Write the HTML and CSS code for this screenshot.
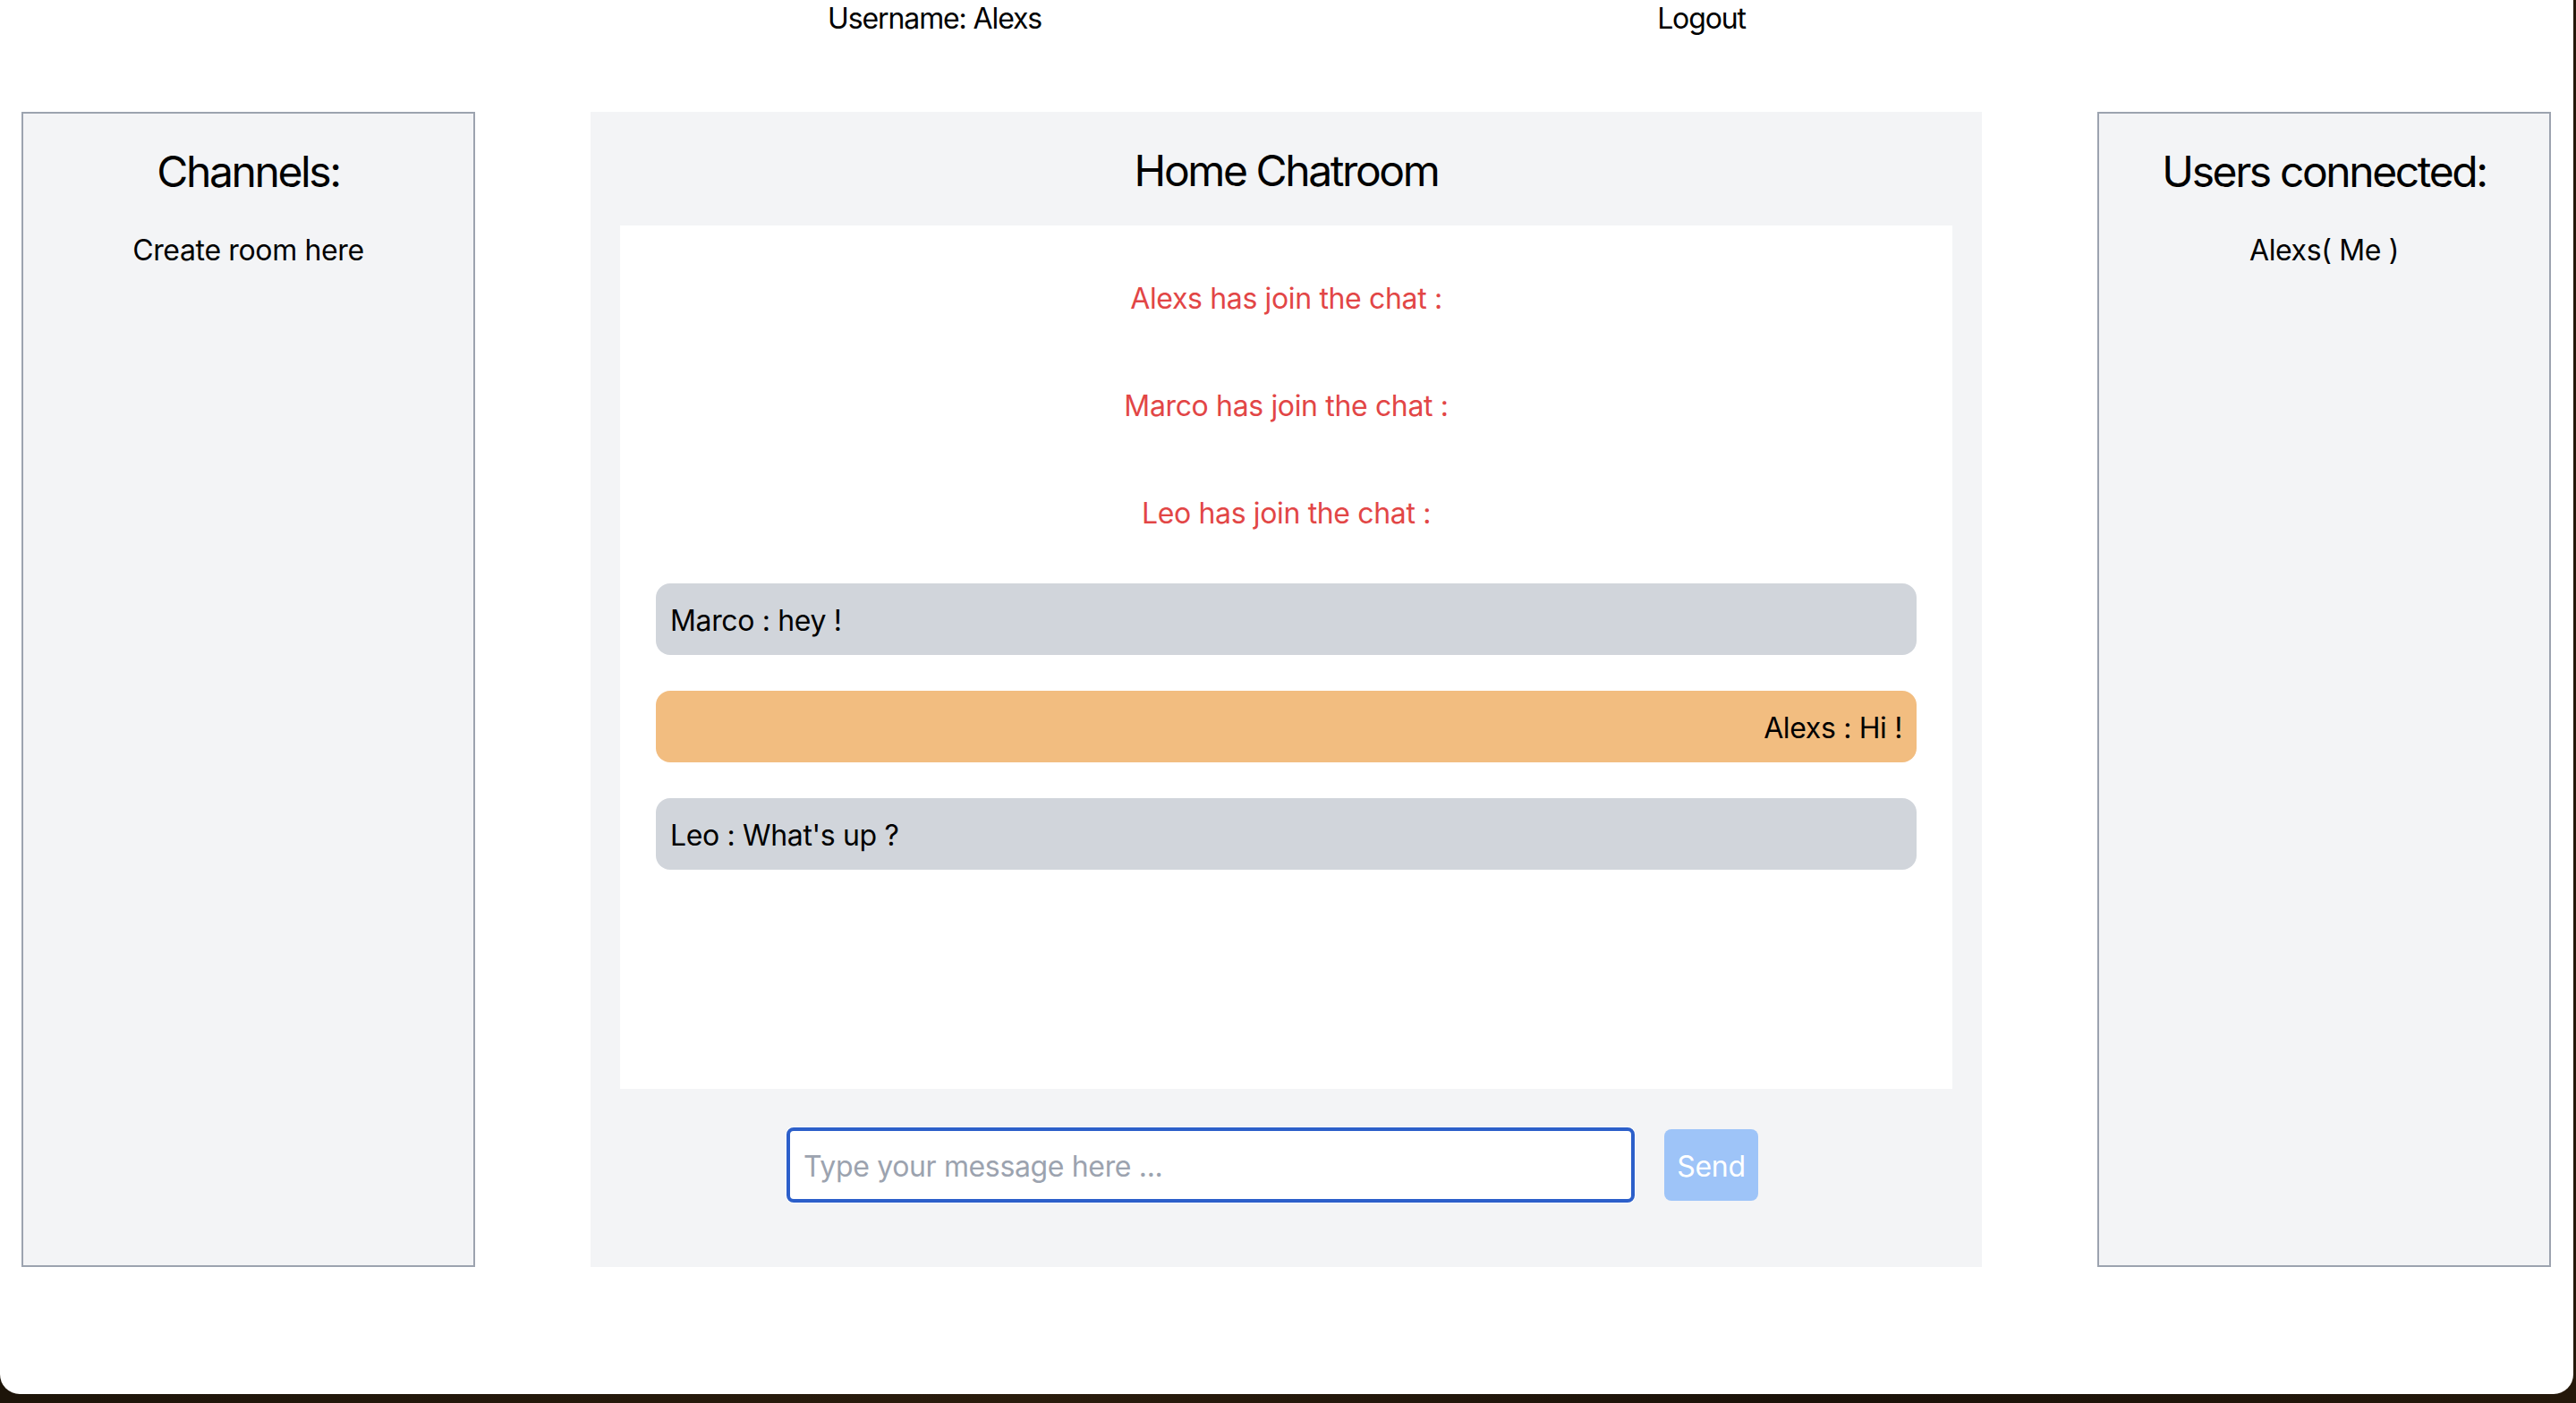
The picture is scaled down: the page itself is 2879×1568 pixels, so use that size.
FILE: index.html
```html
<!DOCTYPE html>
<html lang="en">
<head>
<meta charset="utf-8">
<title>Home Chatroom</title>
<link rel="stylesheet" href="styles.css">
</head>
<body>
<div class="window">
  <header class="topbar">
    <span class="topbar-item">Username: Alexs</span>
    <span class="topbar-item">Logout</span>
  </header>
  <main class="layout">
    <aside class="panel">
      <h2 class="panel-title">Channels:</h2>
      <p class="panel-text">Create room here</p>
    </aside>
    <section class="chat">
      <h1 class="chat-title">Home Chatroom</h1>
      <div class="messages">
        <div class="msg notice">Alexs has join the chat :</div>
        <div class="msg notice">Marco has join the chat :</div>
        <div class="msg notice">Leo has join the chat :</div>
        <div class="msg bubble other">Marco : hey !</div>
        <div class="msg bubble mine">Alexs : Hi !</div>
        <div class="msg bubble other">Leo : What's up ?</div>
      </div>
      <form class="composer">
        <input class="composer-input" type="text" placeholder="Type your message here ...">
        <button class="composer-send" type="button">Send</button>
      </form>
    </section>
    <aside class="panel">
      <h2 class="panel-title">Users connected:</h2>
      <p class="panel-text">Alexs( Me )</p>
    </aside>
  </main>
</div>
</body>
</html>
```

FILE: styles.css
```css
html, body {
  margin: 0;
  padding: 0;
}

body {
  background: linear-gradient(90deg, #1d1409, #2a1c0c 40%, #1a1108 70%, #24180a);
  width: 2879px;
  height: 1568px;
  overflow: hidden;
  font-family: "Inter", "Roboto", "Noto Sans", sans-serif;
  letter-spacing: -0.022em;
  color: #000;
}

.window {
  width: 2876px;
  height: 1558px;
  background: #fff;
  border-radius: 0 0 22px 22px;
  overflow: hidden;
}

.topbar {
  display: flex;
  justify-content: center;
  gap: 688px;
  height: 42px;
  font-size: 32px;
  line-height: 42px;
  letter-spacing: -0.035em;
}

.layout {
  display: flex;
  justify-content: space-between;
  align-items: stretch;
  padding: 0 25px 0 24px;
  margin-top: 83px;
  height: 1291px;
}

.panel {
  box-sizing: border-box;
  width: 507px;
  background: #f3f4f6;
  border: 2px solid #9ca3af;
  padding: 33px 16px;
  text-align: center;
}

.panel-title {
  margin: 0 0 32px;
  font-size: 48px;
  line-height: 64px;
  font-weight: 400;
  letter-spacing: -0.05em;
}

.panel-text {
  margin: 0;
  font-size: 32px;
  line-height: 48px;
}

.chat {
  box-sizing: border-box;
  width: 1555px;
  background: #f3f4f6;
  padding: 34px 33px 0;
  display: flex;
  flex-direction: column;
}

.chat-title {
  margin: 0 0 29px;
  text-align: center;
  font-size: 48px;
  line-height: 64px;
  font-weight: 400;
  letter-spacing: -0.05em;
}

.messages {
  flex: 1;
  background: #fff;
  padding: 40px;
  display: flex;
  flex-direction: column;
  gap: 40px;
}

.msg {
  height: 80px;
  box-sizing: border-box;
  padding: 18px 16px 14px;
  font-size: 32px;
  line-height: 48px;
}

.notice {
  text-align: center;
  color: #e24646;
}

.bubble {
  border-radius: 16px;
}

.other {
  background: #d1d5db;
  text-align: left;
}

.mine {
  background: #f2bd80;
  text-align: right;
}

.composer {
  margin: 43px 0 72px;
  padding-right: 31px;
  display: flex;
  justify-content: center;
  align-items: center;
  gap: 33px;
}

.composer-input {
  box-sizing: border-box;
  width: 948px;
  height: 84px;
  border: 4px solid #2c5fca;
  border-radius: 8px;
  box-shadow: 0 0 0 1px #fff;
  padding: 2px 15px 0;
  font-family: inherit;
  letter-spacing: inherit;
  font-size: 32px;
  color: #111;
  background: #fff;
  outline: none;
}

.composer-input::placeholder {
  color: #9ca3af;
}

.composer-send {
  width: 105px;
  height: 80px;
  border: none;
  border-radius: 8px;
  background: #9ec4f8;
  color: #fff;
  font-family: inherit;
  letter-spacing: inherit;
  font-size: 32px;
  padding: 2px 0 0;
}
```
